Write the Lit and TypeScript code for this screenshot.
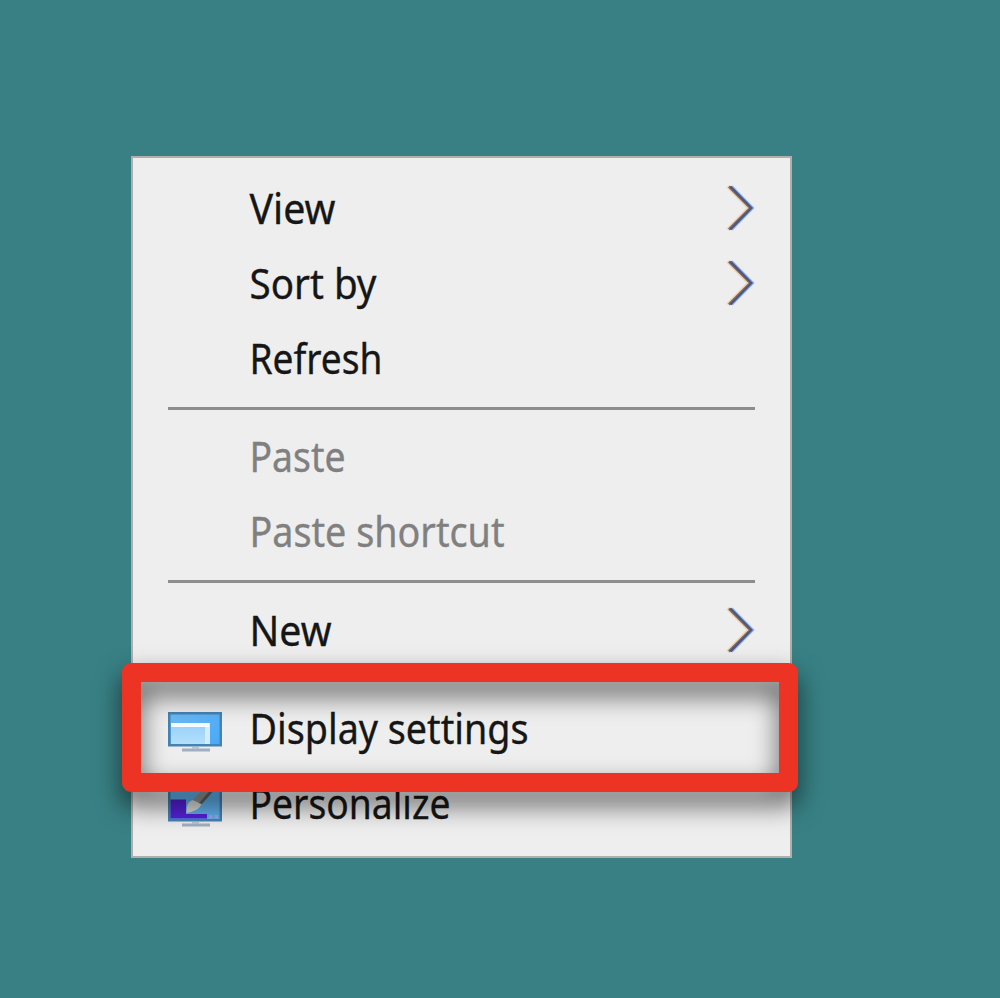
import { LitElement, html, css, svg, nothing } from "lit";
import { customElement, property } from "lit/decorators.js";

interface Entry {
  label: string;
  width: number;
  submenu?: boolean;
  disabled?: boolean;
  icon?: "display" | "personalize";
}

const groups: Entry[][] = [
  [
    { label: "View", width: 86, submenu: true },
    { label: "Sort by", width: 127, submenu: true },
    { label: "Refresh", width: 133 },
  ],
  [
    { label: "Paste", width: 96, disabled: true },
    { label: "Paste shortcut", width: 255, disabled: true },
  ],
  [{ label: "New", width: 82, submenu: true }],
  [
    { label: "Display settings", width: 279, icon: "display" },
    { label: "Personalize", width: 201, icon: "personalize" },
  ],
];

const screen = svg`
  <rect x="1" y="1" width="54" height="34.500" fill="#4583b2"/>
  <rect x="3.5" y="3.5" width="49" height="29.500" fill="url(#sky)"/>
  <path d="M15 37.500h28v3H15z" fill="#a3afc0"/>
  <path d="M25 36h7v2h-7z" fill="#b4c6d6"/>`;

const displayIcon = html`<svg class="icon" viewBox="0 0 56 42">
  <defs>
    <linearGradient id="sky" x1="0" y1="0" x2="1" y2="1">
      <stop offset="0" stop-color="#6cbaf4"/><stop offset="1" stop-color="#48a8f8"/>
    </linearGradient>
    <linearGradient id="pane" x1="0" y1="0" x2="0" y2="1">
      <stop offset="0" stop-color="#9bd2fb"/><stop offset="1" stop-color="#b5dffc"/>
    </linearGradient>
  </defs>
  ${screen}
  <rect x="4" y="12" width="39" height="21" fill="#d3ecfe"/>
  <rect x="4" y="16" width="34" height="17" fill="url(#pane)"/>
  <rect x="4" y="12" width="38" height="4" fill="#f5fbff"/>
</svg>`;

const personalizeIcon = html`<svg class="icon" viewBox="0 0 56 42">
  <defs>
    <linearGradient id="sky" x1="0" y1="0" x2="1" y2="1">
      <stop offset="0" stop-color="#62b5f4"/><stop offset="1" stop-color="#5fb0ea"/>
    </linearGradient>
  </defs>
  ${screen}
  <path d="M3.500 13.500H19v14.500h21v4.500H3.500z" fill="#5520d8"/>
  <path d="M42 29h3.500v3.500H42zM48 29h3v3.500h-3z" fill="#a9a0ee"/>
  <path d="M19.500 27c0-7 1-12 7-13l8 3c-1 5-5 8-15 10z" fill="#dcdcda"/>
  <path d="M26 14L38 1h8L34 18z" fill="#929494"/>
  <path d="M32 17L46 1h4L35 18z" fill="#5c6468"/>
</svg>`;

@customElement("menu-entry")
class MenuEntry extends LitElement {
  @property({ attribute: false }) entry!: Entry;

  static styles = css`
    :host { display: block; }
    .row {
      display: grid;
      grid-template-columns: 82px 1fr 30px;
      align-items: center;
      height: 74.7px;
      padding: 0 35px 0 34px;
      color: #161616;
    }
    .disabled { color: #808080; }
    .icon { display: block; width: 56px; height: 42px; margin-top: 6px; }
    .label { display: block; width: 300px; height: 60px; overflow: visible; }
    .label text {
      font-family: "Noto Sans", "Open Sans", sans-serif;
      font-size: 41.5px;
      fill: currentColor;
      stroke: currentColor;
      stroke-width: 0.35px;
    }
    .chevron { display: block; width: 30px; height: 50px; margin: 0 0 2px 1px; }
  `;

  render() {
    const e = this.entry;
    return html`<div class="row ${e.disabled ? "disabled" : ""}">
      <div>${e.icon === "display" ? displayIcon : e.icon === "personalize" ? personalizeIcon : nothing}</div>
      <svg class="label" viewBox="0 0 300 60">
        <text x="0.500" y="44.500" textLength=${e.width} lengthAdjust="spacingAndGlyphs">${e.label}</text>
      </svg>
      ${e.submenu
        ? html`<svg class="chevron" viewBox="0 0 30 50" fill="none">
            <path d="M1.500 3.500L22.500 25L1.500 46.500" stroke="#ecd3ae" stroke-width="3"/>
            <path d="M5.500 3.500L26.500 25L5.500 46.500" stroke="#86b0ea" stroke-width="3"/>
            <path d="M3 3.500L24.500 25L3 46.500" stroke="#80675f" stroke-width="2.500"/>
            <path d="M4.500 3.500L25.500 25L4.500 46.500" stroke="#4f5480" stroke-width="2"/>
          </svg>`
        : nothing}
    </div>`;
  }
}

@customElement("app-root")
class AppRoot extends LitElement {
  static styles = css`
    :host { display: block; }
    .desktop {
      box-sizing: border-box;
      height: 998px;
      padding: 156px 0 0 131px;
      background: #388084;
      overflow: hidden;
    }
    .menu {
      position: relative;
      box-sizing: border-box;
      width: 661px;
      height: 702px;
      padding-top: 14px;
      background: #eeeeee;
      border: 2px solid #b3aeae;
    }
    .divider {
      height: 3px;
      margin: 10.5px 35px;
      background: #8d8d8d;
    }
    .highlight {
      position: absolute;
      left: -11px;
      top: 505px;
      box-sizing: border-box;
      width: 676px;
      height: 129px;
      border: 19px solid #ed3324;
      border-radius: 9px;
      filter: drop-shadow(0 13px 13px rgba(0, 0, 0, 0.63));
    }
  `;

  render() {
    return html`<main class="desktop">
      <div class="menu">
        ${groups.map(
          (group, i) => html`${i ? html`<div class="divider"></div>` : nothing}
            ${group.map((e) => html`<menu-entry .entry=${e}></menu-entry>`)}`
        )}
        <div class="highlight"></div>
      </div>
    </main>`;
  }
}
